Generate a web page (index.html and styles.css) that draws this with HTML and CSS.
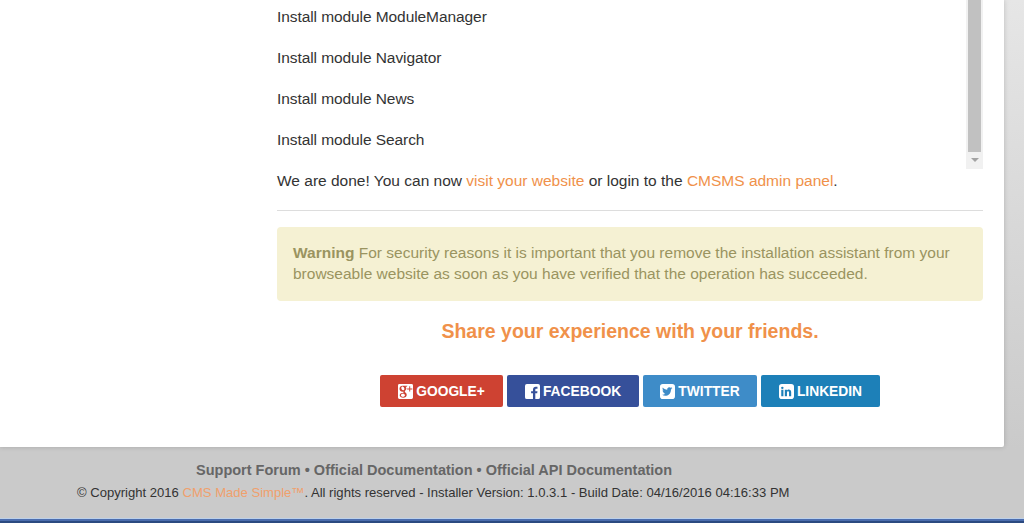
FILE: index.html
```html
<!DOCTYPE html>
<html lang="en">
<head>
<meta charset="utf-8">
<title>CMS Made Simple Installer</title>
<link rel="stylesheet" href="styles.css">
</head>
<body>
<main class="card">
  <section class="log">
    <div class="log-lines">
      <p>Install module ModuleManager</p>
      <p>Install module Navigator</p>
      <p>Install module News</p>
      <p>Install module Search</p>
    </div>
    <div class="scrollbar">
      <div class="thumb"></div>
      <div class="arrow"></div>
    </div>
  </section>
  <p class="done">We are done! You can now <a href="#">visit your website</a> or login to the <a href="#">CMSMS admin panel</a>.</p>
  <hr class="rule">
  <div class="warning"><strong>Warning</strong> For security reasons it is important that you remove the installation assistant from your browseable website as soon as you have verified that the operation has succeeded.</div>
  <h2 class="share">Share your experience with your friends.</h2>
  <div class="buttons">
    <a class="btn google" href="#">
      <svg class="icon" viewBox="0 0 16 16"><path fill="#fff" fill-rule="evenodd" d="M1.500 0h13A1.500 1.500 0 0 1 16 1.500v13a1.500 1.500 0 0 1-1.500 1.500h-13A1.500 1.500 0 0 1 0 14.500v-13A1.500 1.500 0 0 1 1.500 0zM4.800 1.800C3 1.800 1.600 3.200 1.600 5c0 1.900 1.500 3.200 3.200 3.200l.9-.1c-.2.500 0 1 .3 1.300-1.800 0-4.200.7-4.200 2.700 0 1.700 1.800 2.600 3.600 2.600 2.500 0 3.900-1.500 3.900-3 0-2.200-2.100-2.500-2.100-3.600 0-1 1.700-1.400 1.700-3.300 0-.9-.4-1.600-.9-2h1.200l1-.99zM5.200 2.800c1 .1 1.600 1.200 1.600 2.300 0 1-.5 1.600-1.300 1.600C4.400 6.700 3.500 5.500 3.500 4.300c0-1 .6-1.600 1.700-1.500zM5.300 10.300c1.200 0 2.100.7 2.100 1.600 0 1-.9 1.600-2.100 1.600-1.300 0-2.200-.7-2.200-1.600 0-1 1-1.600 2.200-1.600zM12 2.500v2.300H9.700v1H12v2.300h1V5.800h2.300v-1H13V2.500z"/></svg>
      GOOGLE+
    </a>
    <a class="btn facebook" href="#">
      <svg class="icon" viewBox="0 0 16 16"><path fill="#fff" d="M2 0h12a2 2 0 0 1 2 2v12a2 2 0 0 1-2 2h-3V9.900h2l.3-2.300H11V6.200c0-.7.200-1.100 1.100-1.100h1.200V3c-.2 0-.9-.1-1.800-.1-1.800 0-3 1.100-3 3.100v1.600h-2v2.300h2V16H2a2 2 0 0 1-2-2V2a2 2 0 0 1 2-2z"/></svg>
      FACEBOOK
    </a>
    <a class="btn twitter" href="#">
      <svg class="icon" viewBox="0 0 16 16"><path fill="#fff" fill-rule="evenodd" d="M3 0h10a3 3 0 0 1 3 3v10a3 3 0 0 1-3 3H3a3 3 0 0 1-3-3V3a3 3 0 0 1 3-3zm10.300 4.400c-.4.200-.9.300-1.300.4.500-.3.800-.8 1-1.300-.4.300-.9.500-1.400.6a2.300 2.300 0 0 0-3.900 2.100C5.800 6.100 4.100 5.200 3 3.800c-.6 1.100-.3 2.400.7 3.100-.4 0-.7-.1-1-.3 0 1.100.8 2.100 1.800 2.300-.3.100-.7.100-1 0 .3.900 1.100 1.500 2.100 1.600-1 .8-2.200 1.100-3.400 1 3.300 2.100 9.500 1 9.500-5.700.6-.3 1-.7 1.300-1.100z"/></svg>
      TWITTER
    </a>
    <a class="btn linkedin" href="#">
      <svg class="icon" viewBox="0 0 16 16"><path fill="#fff" fill-rule="evenodd" d="M3 0h10a3 3 0 0 1 3 3v10a3 3 0 0 1-3 3H3a3 3 0 0 1-3-3V3a3 3 0 0 1 3-3zm-.600 6.100v7h2.300v-7zm1.150-3.300a1.300 1.300 0 1 0 0 2.600 1.300 1.300 0 0 0 0-2.600zM6.200 6.100v7h2.300V9.300c0-1.100.3-1.700 1.100-1.700s1.100.6 1.100 1.600v3.900h2.300V8.700c0-2-1.100-2.900-2.500-2.900-1 0-1.700.5-2 1.100V6.100z"/></svg>
      LINKEDIN
    </a>
  </div>
</main>
<footer class="footer">
  <div class="footer-links"><a href="#">Support Forum</a> • <a href="#">Official Documentation</a> • <a href="#">Official API Documentation</a></div>
  <div class="footer-copy">© Copyright 2016 <a href="#">CMS Made Simple™</a>. All rights reserved - Installer Version: 1.0.3.1 - Build Date: 04/16/2016 04:16:33 PM</div>
</footer>
<div class="bottom-bar"></div>
</body>
</html>
```
FILE: styles.css
```css
html, body {
  margin: 0;
  height: 523px;
  overflow: hidden;
}
body {
  display: flex;
  flex-direction: column;
  background: linear-gradient(to bottom, #e6e6e6 0, #cacaca 450px);
  font-family: "Liberation Sans", Arial, sans-serif;
  font-size: 15.5px;
  line-height: 21px;
  color: #333;
}
a { text-decoration: none; color: #f0914a; }
p { margin: 0; }

.card {
  box-sizing: border-box;
  width: 1004px;
  height: 447px;
  padding: 0 21px 0 277px;
  background: #fff;
  border-bottom-right-radius: 2px;
  box-shadow: 0 0 5px rgba(0,0,0,.18);
  flex: none;
}
.log {
  display: flex;
  justify-content: space-between;
  height: 169px;
}
.log-lines {
  display: flex;
  flex-direction: column;
  gap: 20px;
  padding-top: 6px;
  letter-spacing: -.08px;
}
.scrollbar {
  box-sizing: border-box;
  width: 17px;
  height: 169px;
  padding: 0 2px;
  background: #f1f1f1;
  display: flex;
  flex-direction: column;
  align-items: center;
}
.thumb {
  width: 13px;
  height: 152px;
  background: #c1c1c1;
}
.arrow {
  margin-top: 6px;
  width: 0;
  height: 0;
  border-left: 4px solid transparent;
  border-right: 4px solid transparent;
  border-top: 4px solid #a3a3a3;
}
.done { margin-top: 1px; }
.rule {
  margin: 19px 0 16px;
  border: 0;
  border-top: 1px solid #ddd;
}
.warning {
  box-sizing: border-box;
  height: 74px;
  padding: 15px 16px;
  background: #f5f1d3;
  border-radius: 4px;
  color: #9a9460;
}
.share {
  margin: 18px 0 0;
  text-align: center;
  font-size: 19.5px;
  line-height: 24px;
  font-weight: 700;
  color: #f0914a;
}
.buttons {
  margin-top: 32px;
  display: flex;
  justify-content: center;
  gap: 4px;
}
.btn {
  display: flex;
  align-items: center;
  justify-content: center;
  gap: 3px;
  box-sizing: border-box;
  height: 32px;
  border-radius: 2px;
  color: #fff;
  font-size: 13.8px;
  font-weight: 700;
}
.icon { width: 15px; height: 15px; flex: none; }
.google { width: 123px; background: #ce4232; }
.facebook { width: 132px; background: #36509a; }
.twitter { width: 114px; background: #3e8cc8; }
.linkedin { width: 119px; background: #1d80b8; }

.footer {
  flex: 1;
  min-height: 0;
  color: #333;
}
.footer-links {
  margin-top: 13px;
  padding-left: 196px;
  font-size: 14.5px;
  line-height: 20px;
  font-weight: 700;
  color: #666;
}
.footer-links a { color: #666; }
.footer-copy {
  margin-top: 4px;
  padding-left: 77px;
  font-size: 13.07px;
  line-height: 18px;
}
.footer-copy a { color: #f0a06c; }
.bottom-bar {
  height: 5px;
  flex: none;
  background: linear-gradient(to bottom, #4b6dae 0, #4b6dae 50%, #2b4a80 50%, #2b4a80 100%);
  border-top: 1px solid #bcd0ea;
  box-sizing: border-box;
}
```
